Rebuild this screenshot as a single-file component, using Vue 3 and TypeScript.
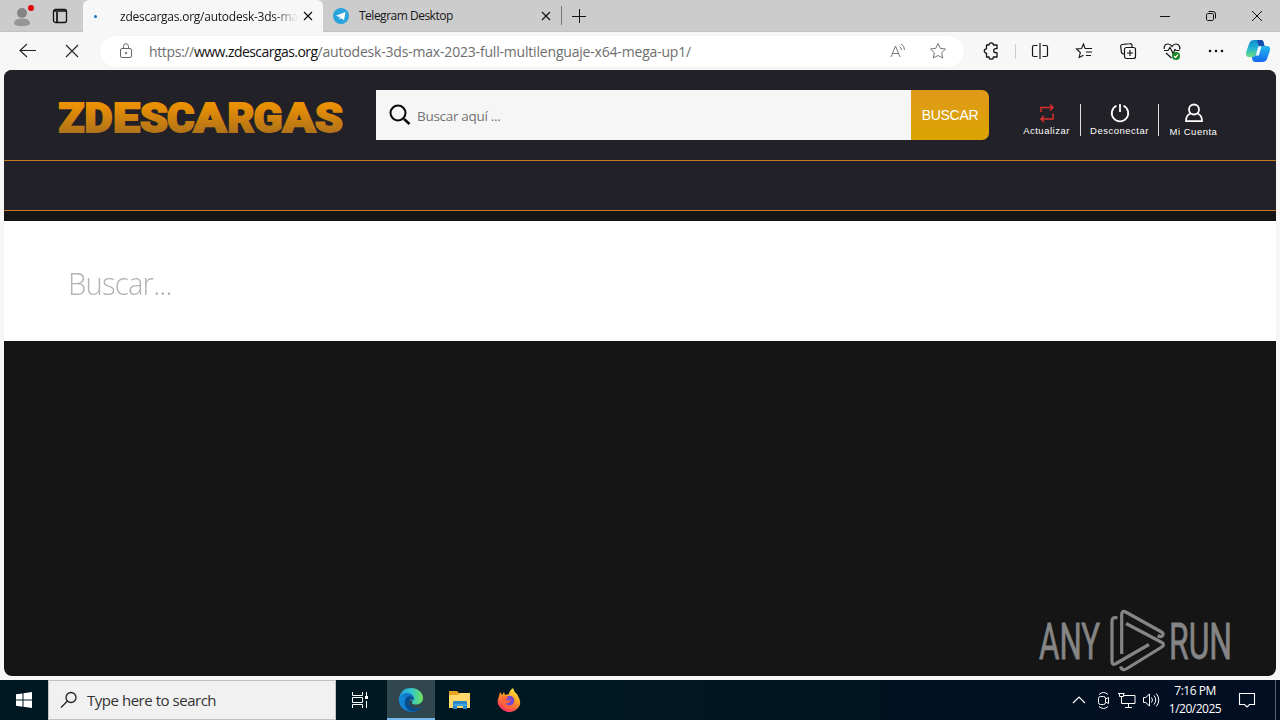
<script setup lang="ts">
import { ref } from 'vue'

interface SiteAction {
  id: string
  label: string
}

interface BrandLetter {
  char: string
  x: number
  width: number
}

const search = ref('')
const actions: SiteAction[] = [
  { id: 'refresh', label: 'Actualizar' },
  { id: 'power', label: 'Desconectar' },
  { id: 'account', label: 'Mi Cuenta' },
]

// The wordmark has uneven letter widths: the two A's are the widest.
const brandLetters: BrandLetter[] = [
  { char: 'Z', x: 2.5, width: 26 },
  { char: 'D', x: 28.5, width: 28 },
  { char: 'E', x: 57, width: 27 },
  { char: 'S', x: 84, width: 28 },
  { char: 'C', x: 111, width: 27.5 },
  { char: 'A', x: 137.5, width: 33 },
  { char: 'R', x: 171.5, width: 27 },
  { char: 'G', x: 197.5, width: 29 },
  { char: 'A', x: 226.5, width: 33 },
  { char: 'S', x: 259, width: 28 },
]
</script>

<template>
  <div class="desktop">
    <header class="tabstrip">
      <svg class="profile" width="28" height="32" viewBox="0 0 28 32">
        <circle cx="14" cy="13" r="5" fill="#858585" />
        <path d="M6 24c0-4 3-5.500 8-5.500s8 1.500 8 5.500c-3 3-13 3-16 0Z" fill="#969696" />
        <circle cx="23" cy="8" r="3" fill="#e3000b" />
      </svg>
      <svg class="workspace" width="16" height="16" viewBox="0 0 16 16" fill="none" stroke="#111">
        <rect x="1.500" y="1.500" width="13" height="13" rx="2" stroke-width="1.300" />
        <path d="M2 3h12M5 4v10" stroke-width="1.700" />
      </svg>
      <div class="tab active">
        <i class="spinner"></i>
        <span class="tab-title current">zdescargas.org/autodesk-3ds-ma</span>
        <svg class="close" width="10" height="10" viewBox="0 0 10 10" stroke="#111" stroke-width="1.200"><path d="M1 1l8 8M9 1L1 9" /></svg>
      </div>
      <div class="tab other">
        <svg width="16" height="16" viewBox="0 0 16 16">
          <circle cx="8" cy="8" r="8" fill="#2aa4dc" />
          <path d="M3 7.800L12.500 4 11 12.200 8.200 10.200 6.800 11.600 6.500 9Z" fill="#fff" />
          <path d="M6.700 9l4.200-3.500-3.600 4.200" fill="#b5d9ec" />
        </svg>
        <span class="tab-title telegram">Telegram Desktop</span>
        <svg class="close" width="10" height="10" viewBox="0 0 10 10" stroke="#111" stroke-width="1.100"><path d="M1 1l8 8M9 1L1 9" /></svg>
      </div>
      <svg class="new-tab" width="14" height="14" viewBox="0 0 14 14" stroke="#111"><path d="M7.500 0v14M0 7.500h14" /></svg>
      <div class="window-buttons">
        <svg width="12" height="12" viewBox="0 0 12 12" fill="none" stroke="#111"><path d="M1 6.500h10" /></svg>
        <svg width="12" height="12" viewBox="0 0 12 12" fill="none" stroke="#111"><rect x="1.500" y="3.500" width="7" height="7" rx="1.200" /><path d="M3.500 1.500H8q2.500 0 2.500 2.500v4.500" /></svg>
        <svg width="12" height="12" viewBox="0 0 12 12" fill="none" stroke="#111"><path d="M1 1l10 10M11 1L1 11" /></svg>
      </div>
    </header>

    <nav class="toolbar">
      <svg class="back" width="18" height="16" viewBox="0 0 18 16" fill="none" stroke="#222" stroke-width="1.100"><path d="M8 1L1 7.500l7 6.500M1 7.500h16" /></svg>
      <svg class="stop" width="14" height="14" viewBox="0 0 14 14" fill="none" stroke="#222" stroke-width="1.100"><path d="M1 1l12 12M13 1L1 13" /></svg>
      <div class="address">
        <svg width="14" height="16" viewBox="0 0 14 16" fill="none" stroke="#666"><rect x="1.500" y="5.500" width="11" height="9" rx="1.500" /><path d="M4.500 5.500V3.500a2.500 2.800 0 0 1 5 0v2" /><circle cx="7" cy="10" r=".7" fill="#555" /></svg>
        <span class="url"><span class="scheme">https://</span><b>www.zdescargas.org</b><span class="path">/autodesk-3ds-max-2023-full-multilenguaje-x64-mega-up1/</span></span>
        <svg class="read" width="16" height="16" viewBox="0 0 16 16" fill="none" stroke="#777"><path d="M1 14L5.500 3 10 14M2.600 10.500h5.800M9.500 3.500q2 1 2 3.500M11 1q3.500 1.500 3.500 6" /></svg>
        <svg class="favorite" width="18" height="18" viewBox="0 0 18 18" fill="none" stroke="#777"><path d="M9 1.500l2.300 4.900 5.200.6-3.800 3.700 1 5.300L9 13.500l-4.700 2.500 1-5.300L1.500 7l5.200-.6Z" stroke-linejoin="round" /></svg>
      </div>
      <svg class="ext" width="18" height="18" viewBox="0 0 18 18" fill="none" stroke="#151515" stroke-width="1.300"><path d="M4.500 3h2.500a2.200 2.200 0 0 1 4.400 0H15v3.700h-1.300a2 2 0 0 0 0 4H15V15h-3.600A2.200 2.200 0 0 1 7 15H4.500v-3.800a2.200 2.200 0 0 1 0-4.400Z" stroke-linejoin="round" /></svg>
      <i class="rule"></i>
      <svg class="split" width="18" height="18" viewBox="0 0 18 18" fill="none" stroke="#151515" stroke-width="1.200"><path d="M9 1v16M6.500 3.500H3a1.500 1.500 0 0 0-1.500 1.500v8A1.500 1.500 0 0 0 3 14.500h3.500M11.500 3.500H15A1.500 1.500 0 0 1 16.500 5v8a1.500 1.500 0 0 1-1.500 1.500h-3.500" /></svg>
      <svg class="stars" width="18" height="18" viewBox="0 0 18 18" fill="none" stroke="#151515" stroke-width="1.100"><path d="M10 6.500L8.500 2 6.500 6.500 1.500 7l3.800 3.500L4.200 15.500l4.300-2.200M10 6.500h7M11 10h6M11 13.500h5" /></svg>
      <svg class="collections" width="18" height="18" viewBox="0 0 18 18" fill="none" stroke="#151515" stroke-width="1.200"><rect x="5.500" y="5.500" width="11" height="11" rx="2" /><path d="M13 5V3q-.5-1.500-2-1.300L3 2.500Q1.500 3 1.700 4.500l.8 6Q3 12 5 12M11 8v6M8 11h6" /></svg>
      <svg class="health" width="18" height="18" viewBox="0 0 18 18" fill="none" stroke="#151515" stroke-width="1.200"><path d="M1.200 7C.5 3.500 3 2 5 2q2.500 0 4 2.400Q10.500 2 13 2c3 0 4.500 3 3.500 5.500M1 8.500h4l2-3 3 6 2-4 1 1h3.500M3 11l5.500 5" /><circle cx="13" cy="14" r="4" fill="#16831f" stroke="none" /><path d="M11 14l1.500 1.500L15 12.500" stroke="#fff" /></svg>
      <svg class="more" width="16" height="4" viewBox="0 0 16 4" fill="#151515"><circle cx="2" cy="2" r="1.300" /><circle cx="8" cy="2" r="1.300" /><circle cx="14" cy="2" r="1.300" /></svg>
      <svg class="copilot" width="26" height="24" viewBox="0 0 26 24">
        <defs>
          <linearGradient id="copilotLeft" x1="0" y1="0" x2="0" y2="1"><stop stop-color="#118bd1" /><stop offset=".5" stop-color="#23b4d4" /><stop offset="1" stop-color="#6ce078" /></linearGradient>
          <linearGradient id="copilotRight" x1="0" y1="0" x2="0" y2="1"><stop stop-color="#22b8ed" /><stop offset="1" stop-color="#1769ed" /></linearGradient>
        </defs>
        <path d="M9 1h7q2 0 2.500 2l1 4h-4q-2 0-2.700 2l-2 6.500Q10 18 7 18H4Q0 18 1.200 13L4 5q1.200-4 5-4Z" fill="url(#copilotLeft)" />
        <path d="M18 7h4q4 0 2.800 5L22 20q-1 3-5 3H10q-2 0-2.500-2l-.8-3Q10 18 11 15l2-6q.8-2 3-2Z" fill="url(#copilotRight)" />
        <path d="M12 1h4q2 0 2.500 2l1 4h-4Q13 7 12 1Z" fill="#144cb0" />
        <path d="M13.500 7.500h3l-2.700 9h-3Z" fill="#f5fbff" />
      </svg>
    </nav>

    <main class="page">
      <header class="site-header">
        <svg class="site-logo" width="288" height="40" viewBox="0 0 288 40">
          <defs><linearGradient id="brand" gradientUnits="userSpaceOnUse" x1="0" y1="3" x2="0" y2="36"><stop offset=".15" stop-color="#ea9003" /><stop offset="1" stop-color="#ad711b" /></linearGradient></defs>
          <text y="34" fill="url(#brand)" stroke="url(#brand)"><tspan v-for="letter in brandLetters" :key="letter.x" :x="letter.x" :textLength="letter.width" lengthAdjust="spacingAndGlyphs">{{ letter.char }}</tspan></text>
        </svg>
        <form class="site-search" @submit.prevent>
          <label>
            <svg width="22" height="22" viewBox="0 0 22 22" fill="none" stroke="#080808" stroke-width="2"><circle cx="9" cy="9" r="7.500" /><path d="M15 15l5.500 5" stroke-width="2.500" /></svg>
            <input v-model="search" placeholder="Buscar aquí ..." />
          </label>
          <button type="submit">BUSCAR</button>
        </form>
        <div class="actions">
          <a v-for="action in actions" :key="action.id" :class="action.id">
            <svg v-if="action.id === 'refresh'" width="18" height="20" viewBox="0 0 18 20" fill="none" stroke="#d9302d" stroke-width="1.500"><path d="M3 9V4.500h12M12 1.500l3 3-3 3M15 10.500V16H3M6 13l-3 3 3 3" /></svg>
            <svg v-else-if="action.id === 'power'" width="20" height="20" viewBox="0 0 20 20" fill="none" stroke="#fff" stroke-width="1.800"><path d="M6.500 2.700a8.200 8.200 0 1 0 7 0M10 1v8" /></svg>
            <svg v-else width="20" height="20" viewBox="0 0 20 20" fill="none" stroke="#fff" stroke-width="1.800"><circle cx="10" cy="6.500" r="5" /><path d="M6.500 10.500Q2 12 2 18.200h16q0-6.200-4.500-7.700" /></svg>
            <span>{{ action.label }}</span>
          </a>
        </div>
      </header>
      <div class="menu-band"></div>
      <div class="search-panel"><span>Buscar...</span></div>
      <svg class="watermark" width="196" height="66" viewBox="0 0 196 66">
        <g class="watermark-text">
          <text x="2" y="51" textLength="61" lengthAdjust="spacingAndGlyphs">ANY</text>
          <text x="132" y="51" textLength="63" lengthAdjust="spacingAndGlyphs">RUN</text>
        </g>
        <g fill="none" stroke="#858585" stroke-width="3.200" stroke-linejoin="round">
          <path d="M80.500 10q-5.500-1.500-5.500 3v40q0 5 4 2.500l33-19" />
          <path d="M84.700 46V7q0-5 4-3l35 19.500q3.500 2 2 4t-5 0" />
          <path d="M89 15.500l35 18.500q5 2.500 0 5.500L90 60.500q-5 3-6.500-2" />
        </g>
      </svg>
    </main>

    <footer class="taskbar">
      <div class="start"><svg width="16" height="16" viewBox="0 0 16 16" fill="#fff"><path d="M0 2.300L6.500 1.400V7.500H0ZM7.500 1.200L16 0v7.500H7.500ZM0 8.500h6.500v6.200L0 13.800ZM7.500 8.500H16V16l-8.500-1.200Z" /></svg></div>
      <div class="task-search">
        <svg width="18" height="18" viewBox="0 0 18 18" fill="none" stroke="#222" stroke-width="1.300"><circle cx="11" cy="6.500" r="5" /><path d="M7.500 10L1 16.500" /></svg>
        <span>Type here to search</span>
      </div>
      <div class="task-button"><svg width="18" height="18" viewBox="0 0 18 18" fill="none" stroke="#fff"><path d="M1.500 1v3.500h10V1M1.500 17v-3.500h10V17M1.500 6.500h10v5h-10ZM15.500 1v4M15.500 10v7" /><path d="M15.500 5v3" stroke-width="3" /></svg></div>
      <div class="task-button selected">
        <svg width="26" height="26" viewBox="0 0 26 26">
          <defs><linearGradient id="edgeTop"><stop stop-color="#239adc" /><stop offset=".5" stop-color="#31c6cf" /><stop offset="1" stop-color="#6ee35b" /></linearGradient><linearGradient id="edgeBody"><stop stop-color="#118bdd" /><stop offset="1" stop-color="#0c59a3" /></linearGradient></defs>
          <path d="M1 12C2 4 7 1 13 1c7 0 12 4.500 12 10 0 4-3 6.500-7 6.500-4 0-5-1.500-3-4Z" fill="url(#edgeTop)" />
          <path d="M1 13c0-5 4-7 8-7 5 0 8 4 7 7-2-2-6 0-5 4 1 5 8 6 12 3-3 5-9 6-14 4-5-2-8-6-8-11Z" fill="url(#edgeBody)" />
          <path d="M9 10c-4 4-2 12 4 14 4 1 8-1 10-4-4 3-10 2-12-3-1-4 2-6 5-4-1-3-4-5-7-3Z" fill="#0a4b8c" />
        </svg>
      </div>
      <div class="task-button"><svg width="24" height="22" viewBox="0 0 24 22"><path d="M1 2h8l2 2h11v15H1Z" fill="#e9a522" /><path d="M1 6h9l2-2h10v15H1Z" fill="#ffd96c" /><path d="M5 20v-7q0-1 1-1h12q1 0 1 1v7h-4v-3H9v3Z" fill="#2b88ca" /><path d="M6 16h12" stroke="#4dafea" stroke-width="1.500" /></svg></div>
      <div class="task-button"><svg width="24" height="26" viewBox="0 0 24 26">
        <defs><linearGradient id="fox" x1=".8" y1="0" x2=".3" y2="1"><stop stop-color="#fff144" /><stop offset=".45" stop-color="#ff9a22" /><stop offset="1" stop-color="#fa2369" /></linearGradient></defs>
        <path d="M3 5l2 3 2-3 1 3 4-1q0-3 4-6 1 4 4 6l1 2q5 8-1 13-6 6-14 1Q-2 18 2 9Z" fill="url(#fox)" /><circle cx="12.500" cy="13.500" r="4.800" fill="#7047d4" /><path d="M5 10q4-2 7 1-3 0-3 2 3 1 5-1-1 5-5 4-2 3 4 4 4 0 6-3-2 6-8 5-7-2-6-12Z" fill="#ff6737" />
      </svg></div>
      <div class="tray">
        <svg width="14" height="10" viewBox="0 0 14 10" fill="none" stroke="#fff" stroke-width="1.200"><path d="M1 8l6-6 6 6" /></svg>
        <svg width="14" height="18" viewBox="0 0 14 18" fill="none" stroke="#fff"><rect x="1.500" y="5.500" width="7" height="8" rx="2" /><path d="M8.500 8l3-1.500v6l-3-1.500M2 3.500q4.500-4 9 0M2 15.500q4.500 4 9 0" /></svg>
        <svg width="18" height="18" viewBox="0 0 18 18" fill="none" stroke="#fff"><path d="M6 4.500h11v8H4.500M10.500 13v3M7 16.500h7M1.500 2v3.500h4V2M0 2.500h6.500M3.500 5.500v7h2" /></svg>
        <svg width="18" height="18" viewBox="0 0 18 18" fill="none" stroke="#fff"><path d="M1.500 6.500h2.300L7.500 3v12l-3.700-3.500H1.500ZM9.500 6.500q2 2.500 0 5M12 4.500q3.500 4.500 0 9M14.300 2.500q5 6.500 0 13" /></svg>
      </div>
      <div class="clock"><span>7:16 PM</span><span class="date">1/20/2025</span></div>
      <svg class="notifications" width="18" height="18" viewBox="0 0 18 18" fill="none" stroke="#fff" stroke-width="1.100"><path d="M1.500 2.500h15v11h-5L9 16l-2.500-2.500h-5Z" /></svg>
      <i class="show-desktop"></i>
    </footer>
  </div>
</template>

<style>
body { margin: 0; overflow: hidden; }
</style>

<style scoped>
* { box-sizing: border-box; }
svg { display: block; flex: none; }
.desktop { width: 1280px; height: 720px; overflow: hidden; background: #f7f7f7; font-family: "Open Sans", "Noto Sans", sans-serif; }
.tabstrip { height: 32px; display: flex; align-items: center; background: #ccc; border-bottom: 1px solid #c2c2c2; }
.profile { margin-left: 8px; }
.workspace { margin-left: 16px; }
.tab { height: 32px; display: flex; align-items: center; font-size: 12px; color: #161616; white-space: nowrap; }
.tab.active { width: 240px; margin-left: 15px; background: #f7f7f7; border-radius: 6px 6px 0 0; padding-left: 11px; margin-bottom: -1px; }
.spinner { width: 3px; height: 3px; border-radius: 50%; background: #1674c4; margin-right: 23px; }
.tab-title { overflow: hidden; flex: none; }
.current { width: 178px; letter-spacing: -.24px; -webkit-mask-image: linear-gradient(90deg, #000 86%, transparent); mask-image: linear-gradient(90deg, #000 86%, transparent); }
.current + .close { margin-left: 4.5px; }
.other { padding-left: 10px; width: 239px; }
.telegram { width: 174px; padding-left: 10px; letter-spacing: -.5px; }
.telegram + .close { margin-left: 18px; }
.new-tab { margin-left: 10px; }
.tab.other::after { content: ''; width: 1px; height: 19px; background: #777; margin-left: 10px; }
.window-buttons { display: flex; gap: 34px; margin-left: auto; margin-right: 17px; }

.toolbar { height: 38px; display: flex; align-items: center; }
.back { margin-left: 19px; }
.stop { margin-left: 28px; }
.address { width: 864px; height: 31px; margin-left: 21px; border-radius: 16px; background: #fff; display: flex; align-items: center; padding-left: 19px; box-shadow: 0 0 2px #ededed; }
.url { width: 725px; margin-left: 16px; display: flex; font-size: 14px; color: #6e6e6e; white-space: nowrap; }
.url b { color: #111; font-weight: 400; letter-spacing: -.55px; }
.scheme { letter-spacing: -.36px; }
.path { letter-spacing: -.19px; }
.read { margin-left: 16px; }
.favorite { margin-left: 23px; }
.ext { margin-left: 18px; }
.rule { width: 1px; height: 15px; background: #ccc; margin-left: 15px; }
.split { margin-left: 14.5px; }
.stars { margin-left: 26.5px; }
.collections, .health { margin-left: 26px; }
.more { margin-left: 27px; }
.copilot { margin-left: 21px; }

.page { height: 606px; margin: 0 4px; border-radius: 8px; overflow: hidden; background: #151515; display: flex; flex-direction: column; align-items: stretch; }
.site-header { height: 91px; display: flex; align-items: flex-start; background: #222127; border-bottom: 1px solid #c77a25; }
.site-logo { margin: 28px 0 0 52px; overflow: visible; }
.site-logo text { font: 900 41px Roboto, sans-serif; stroke-width: 1.800; stroke-linejoin: miter; }
.site-search { width: 613px; height: 50px; display: flex; margin: 20px 0 0 32px; }
.site-search label { width: 535px; display: flex; align-items: center; background: #f6f6f6; padding-left: 13px; }
.site-search input { border: 0; outline: 0; background: none; padding: 1px 0 0 6px; width: 440px; font: 13.500px "Open Sans", sans-serif; letter-spacing: -.3px; }
.site-search input::placeholder { color: #747474; opacity: 1; }
.site-search button { width: 78px; padding: 0; border: 0; border-radius: 0 7px 7px 0; background: linear-gradient(#df991a, #dba400); color: #fff; font: 14px "Liberation Sans", Arial, sans-serif; letter-spacing: -.3px; }
.actions { display: flex; margin: 34px 0 0 23px; }
.actions a { height: 32px; display: flex; flex-direction: column; align-items: center; font: 9.500px "Liberation Sans", Arial, sans-serif; letter-spacing: .5px; color: #fff; white-space: nowrap; }
.actions a + a { border-left: 1px solid #ddd; }
.actions svg { margin-top: -1px; }
.actions span { margin-top: 2px; line-height: 12px; }
.refresh { width: 68px; padding-left: 1px; }
.power { width: 78px; }
.account { width: 70px; }
.actions .account span { margin-top: 3px; }
.menu-band { height: 50px; background: #222127; border-bottom: 1px solid #c77a25; }
.search-panel { height: 120px; margin-top: 10px; background: #fff; display: flex; align-items: center; padding: 3px 0 0 64px; }
.search-panel span { font: 300 32px "Open Sans", sans-serif; letter-spacing: -.9px; color: #b4b4b4; transform: scaleX(.915); transform-origin: left; }
.watermark { align-self: flex-end; margin: auto 43px 2px 0; overflow: visible; }
.watermark-text { fill: #858585; stroke: #858585; stroke-width: .8px; font: 400 50px Roboto, sans-serif; }

.taskbar { height: 40px; margin-top: 4px; display: flex; align-items: stretch; background: linear-gradient(90deg, #001821 0%, #001821 45%, #020d22 100%); color: #fff; }
.start { width: 48px; display: flex; align-items: center; justify-content: center; }
.task-search { width: 288px; display: flex; align-items: center; background: #f1f1f1; border: 1px solid #c2c2c2; color: #333; padding-left: 11px; font-size: 15px; }
.task-search span { margin: 0 0 0 9px; letter-spacing: -.47px; }
.task-button { width: 49px; display: flex; justify-content: center; align-items: center; }
.task-button:nth-child(3) { width: 51px; padding-right: 3px; }
.task-button.selected { width: 48px; background: #304750; border-bottom: 2px solid #76b9ed; padding-top: 2px; }
.tray { margin-left: auto; display: flex; align-items: center; gap: 9px; }
.tray svg:nth-child(2) { margin: 0 -2px 0 2px; }
.tray svg:nth-child(4) { margin-left: -3px; }
.clock { width: 62px; margin-left: 4px; display: flex; flex-direction: column; align-items: center; font-size: 12px; line-height: 18px; padding-top: 2px; letter-spacing: -.5px; white-space: nowrap; }
.notifications { align-self: center; margin-left: 12px; }
.show-desktop { width: 5px; margin-left: 19px; border-left: 1px solid #536073; }
</style>
